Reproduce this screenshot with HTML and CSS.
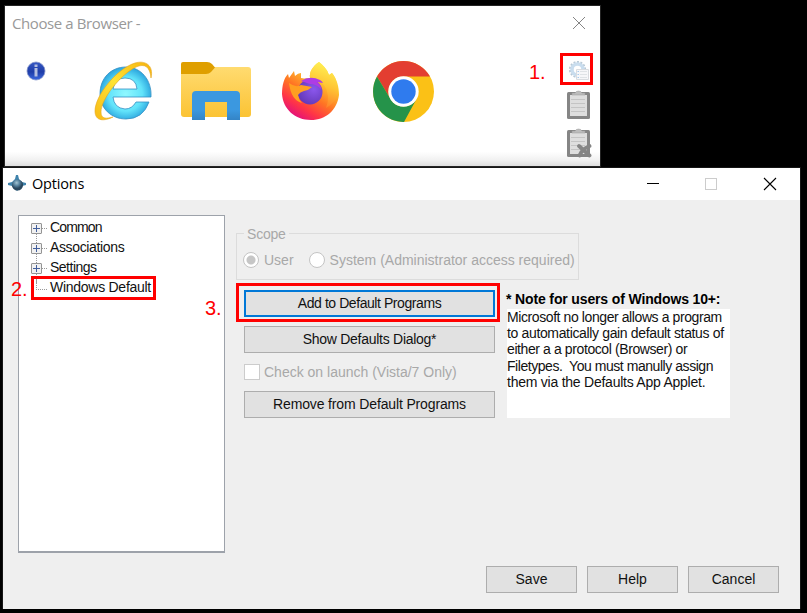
FILE: index.html
```html
<!DOCTYPE html>
<html lang="en">
<head>
<meta charset="utf-8">
<title>Options</title>
<link rel="stylesheet" href="styles.css">
</head>
<body>
<main class="desktop">
  <section class="window chooser">
    <header class="chooser-title">
      <span>Choose a Browser -</span>
      <svg width="12" height="12" viewBox="0 0 12 12"><path d="M0 0L12 12M12 0L0 12" stroke="#858585" fill="none"/></svg>
    </header>
    <div class="chooser-body">
      <svg class="info" width="20" height="20" viewBox="0 0 20 20">
        <defs><linearGradient id="info" x2="0" y2="1"><stop stop-color="#3658c4"/><stop offset=".55" stop-color="#1f3da8"/><stop offset="1" stop-color="#3c68e0"/></linearGradient></defs>
        <circle cx="10" cy="10" r="9" fill="url(#info)" stroke="#8795c9" stroke-width=".8"/>
        <path d="M8.500 3.500h3v2.500h-3zM8.500 7h3v8.500h-3z" fill="#b4bee0"/>
      </svg>
      <svg class="ie" width="60" height="62" viewBox="0 0 60 62">
        <defs>
          <radialGradient id="ie" cx=".5" cy=".52" r=".55"><stop stop-color="#8ff8ff"/><stop offset=".6" stop-color="#62e3fa"/><stop offset="1" stop-color="#229bd9"/></radialGradient>
          <linearGradient id="ring" x1="0" y1="1" x2="1" y2="0"><stop stop-color="#f8ba16"/><stop offset=".5" stop-color="#ffe334"/><stop offset="1" stop-color="#f6b30e"/></linearGradient>
        </defs>
        <path fill="url(#ie)" stroke="#3690c4" stroke-width=".8" fill-rule="evenodd" d="M58 37H20Q21 48 32 49Q39 49 43 42H56Q50 59 33 59C18 59 7 48 7 34C7 18 18 7 33 7C48 7 59 20 58 37ZM20 29H44Q43 18 32 18Q22 18 20 29Z"/>
        <path fill="url(#ring)" stroke="#e6a51a" stroke-width=".6" d="M58 18C61 5 52 0 42 3C23 9 2 36 2 51C2 62 12 61 20 57C13 59 8 59 8 52C8 39 28 14 43 7C52 3 57 7 58 18Z"/>
      </svg>
      <svg class="folder" width="70" height="58" viewBox="0 0 70 58">
        <defs>
          <linearGradient id="folder" x2="0" y2="1"><stop stop-color="#ffdb70"/><stop offset="1" stop-color="#fbc334"/></linearGradient>
          <linearGradient id="stand" x2="0" y2="1"><stop offset=".65" stop-color="#3b98e0"/><stop offset="1" stop-color="#3484c6"/></linearGradient>
        </defs>
        <path fill="url(#folder)" d="M0 10L30 5H67Q70 5 70 8V52Q70 55 67 55H3Q0 55 0 52Z"/>
        <path fill="#df9f00" d="M2 0H26Q29 0 31 2L34 5.500L30 10Q28 12 25 12H0V2Q0 0 2 0Z"/>
        <path fill="url(#stand)" d="M11 58V33Q11 29 15 29H55Q59 29 59 33V58H46V40H24V58Z"/>
      </svg>
      <svg class="firefox" width="60" height="60" viewBox="0 0 60 60">
        <defs>
          <linearGradient id="fox" x1=".85" y1=".05" x2=".25" y2="1"><stop stop-color="#fff34e"/><stop offset=".3" stop-color="#ffc02c"/><stop offset=".56" stop-color="#ff7424"/><stop offset=".78" stop-color="#ff3546"/><stop offset="1" stop-color="#df0b83"/></linearGradient>
          <radialGradient id="globe" cx=".65" cy=".4" r=".65"><stop stop-color="#8b57ed"/><stop offset="1" stop-color="#6439b9"/></radialGradient>
          <linearGradient id="flame" x1=".6" x2=".4" y2="1"><stop stop-color="#fff456"/><stop offset=".5" stop-color="#ffc534"/><stop offset="1" stop-color="#ff7a28"/></linearGradient>
        </defs>
        <path fill="url(#fox)" d="M38 1C42 4 46 8 48 14L51 12C56 18 58 26 58 34C56 49 45 59 30 59C14 59 2 48 1 33C1 24 3 17 7 13L8 17L13 10L14 15Q17 12 20 12L20 17C23 18 26 17 29 17C28 11 32 5 38 1Z"/>
        <path fill="url(#flame)" d="M38 1C42 4 46 8 48 14L51 12C56 18 58 28 55 37Q52 43 45 47Q50 34 43 24Q36 18 29 17C28 11 32 5 38 1Z"/>
        <circle cx="29" cy="31" r="12.500" fill="url(#globe)"/>
        <path fill="#ae3ce4" d="M20 20Q29 14 39 19Q41 20 42 22L36 21Q40 24 40 28Q35 23 29 23Z"/>
        <path fill="#ff9f21" d="M8 22Q15 27 20 24L31 26Q28 29 23 30Q19 31 17 34Q18 39 21 42Q10 39 8 22Z"/>
      </svg>
      <svg class="chrome" width="61" height="61" viewBox="0 0 61 61">
        <circle cx="30.500" cy="30.500" r="30.500" fill="#fbc116"/>
        <path fill="#e33e31" d="M4 15.500A30.500 30.500 0 0 1 57 15.500H30.500A15 15 0 0 0 17.500 38Z"/>
        <path fill="#25934a" d="M4 15.500A30.500 30.500 0 0 0 31 61L43.500 38A15 15 0 0 1 17.500 38Z"/>
        <circle cx="30.500" cy="30.500" r="15.200" fill="#fff"/><circle cx="30.500" cy="30.500" r="12.200" fill="#2f7bee"/>
      </svg>
      <nav class="side-tools">
        <svg class="settings" width="22" height="22" viewBox="0 0 22 22">
          <circle cx="9.500" cy="9.500" r="7.600" fill="none" stroke="#b9c9d6" stroke-width="2" stroke-dasharray="2 1.500"/>
          <circle cx="9.500" cy="9.500" r="5.500" fill="none" stroke="#c9ddee" stroke-width="3.500"/>
          <path fill="#f6f7f9" stroke="#d9dce0" d="M8.500 9.500h12v10h-12z"/><path stroke="#dfe3e6" d="M12 11.500h7M12 14.500h7M12 17.500h7"/><path stroke="#a9cbee" d="M9.500 11.500h1.500M9.500 14.500h1.500M9.500 17.500h1.500"/>
        </svg>
        <svg width="26" height="30" viewBox="0 0 26 30">
          <g id="clipboard"><rect x="1" y="2" width="23" height="27" rx="1.500" fill="#858585"/><path fill="#dedede" d="M4 5h17v21H4z"/><path stroke="#c4c4c4" d="M5 9.500h14M5 13.500h14M5 17.500h14M5 21.500h14"/><path fill="#bcbcbc" stroke="#999" stroke-width=".5" d="M6 5V3h3q1-2 3.500-2T16 3h3v2z"/></g>
        </svg>
        <svg width="26" height="30" viewBox="0 0 26 30"><use href="#clipboard"/><path d="M13 18L23.500 27.500M23.500 18Q16 21 13.500 27.500" fill="none" stroke="#858585" stroke-width="3.800" stroke-linecap="round"/></svg>
      </nav>
    </div>
  </section>

  <section class="window options">
    <header class="options-title">
      <svg width="18" height="18" viewBox="0 0 18 18">
        <defs><radialGradient id="app" cx=".42" cy=".3"><stop stop-color="#a5c4d2"/><stop offset=".5" stop-color="#5c87a2"/><stop offset="1" stop-color="#2a475e"/></radialGradient></defs>
        <path fill="#3f83ac" d="M8 0H10L11 4L14 7L18 8V10L14 11L10 15L9 16L7 14L4 11L0 10V8L4 7L7 4Z"/><circle cx="9.500" cy="10" r="5.600" fill="url(#app)"/>
      </svg>
      <span>Options</span>
      <svg class="controls" width="130" height="14" viewBox="0 0 130 14" fill="none">
        <path d="M0 6.500H12" stroke="#000"/><rect x="58.500" y="1.500" width="11" height="11" stroke="#ccc"/><path d="M117 1L129 13M129 1L117 13" stroke="#000" stroke-width="1.100"/>
      </svg>
    </header>
    <div class="options-body">
      <ul class="tree">
        <li><i class="expander"></i><span class="t-common">Common</span></li>
        <li><i class="expander"></i><span class="t-assoc">Associations</span></li>
        <li><i class="expander"></i><span class="t-settings">Settings</span></li>
        <li><i class="leaf"></i><span class="t-default">Windows Default</span></li>
      </ul>
      <div class="panel">
        <div class="scope">
          <span class="legend">Scope</span>
          <label class="radio"><i class="dot on"></i><span class="t-user">User</span></label>
          <label class="radio"><i class="dot"></i><span class="t-system">System (Administrator access required)</span></label>
        </div>
        <div class="columns">
          <div class="actions">
            <button class="focused"><span class="t-add">Add to Default Programs</span></button>
            <button><span class="t-show">Show Defaults Dialog*</span></button>
            <label class="check"><i></i><span class="t-check">Check on launch (Vista/7 Only)</span></label>
            <button><span class="t-remove">Remove from Default Programs</span></button>
          </div>
          <aside class="note">
            <b>* Note for users of Windows 10+:</b>
            <p><span class="n1">Microsoft no longer allows a program</span><br><span class="n2">to automatically gain default status of</span><br><span class="n3">either a a protocol (Browser) or</span><br><span class="n4">Filetypes.&nbsp; You must manully assign</span><br><span class="n5">them via the Defaults App Applet.</span></p>
          </aside>
        </div>
        <footer class="buttons"><button>Save</button><button>Help</button><button>Cancel</button></footer>
      </div>
    </div>
  </section>

  <span class="mark box1"></span><span class="mark box2"></span><span class="mark box3"></span>
  <span class="step step1">1.</span><span class="step step2">2.</span><span class="step step3">3.</span>
</main>
</body>
</html>
```
FILE: styles.css
```css
* { box-sizing: border-box; }
body { margin: 0; background: #000; }
svg { display: block; flex: none; }
.desktop {
  position: relative;
  width: 807px;
  height: 613px;
  overflow: hidden;
  background: #000;
  font: 14px/20px "Liberation Sans", sans-serif;
  color: #111;
}
.window { position: absolute; }

/* Browser chooser */
.chooser {
  left: 4px; top: 5px; width: 597px; height: 162px;
  border: 1px solid #242424;
  background: linear-gradient(#fff 91%, #f2f2f2 96%, #dedede);
}
.chooser-title {
  display: flex; justify-content: space-between; align-items: center;
  height: 34px; padding: 0 15px 0 7px;
  font: 15px/20px "Open Sans", sans-serif;
  letter-spacing: -.4px; color: #999;
}
.chooser-body { display: flex; align-items: flex-start; padding-left: 21px; }
.info { margin-top: 21px; }
.ie { margin: 20px 0 0 47px; }
.folder { margin: 22px 0 0 28px; }
.firefox { margin: 21px -1px 0 30px; }
.chrome { margin: 21px 0 0 33px; }
.side-tools { display: flex; flex-direction: column; margin: 20px 0 0 132px; }
.side-tools svg + svg { margin-top: 8px; }
.side-tools .settings { margin: 0 0 0 2px; }

/* Options dialog */
.options {
  left: 2px; top: 167px; width: 799px; height: 442px;
  border: 1px solid #161616; border-bottom: 0;
  background: #efefef;
}
.options-title {
  display: flex; align-items: center;
  height: 32px; padding: 0 23px 0 5px;
  background: #fff;
  font: 14.500px/20px "Open Sans", sans-serif; color: #000;
}
.options-title span { margin-left: 6px; letter-spacing: -.2px; }
.controls { margin-left: auto; }
.options-body { display: flex; padding: 15px 0 0 15px; }
.tree {
  width: 207px; height: 338px; margin: 0; padding: 2px 0 0 11px;
  list-style: none; background: #fff; border: 2px solid #9da2aa; border-width: 1px 1px 2px 1px;
}
.tree li { display: flex; align-items: center; height: 20px; }
.tree span { position: relative; top: -1px; margin-left: 4px; white-space: nowrap; }
.expander, .leaf { position: relative; flex: none; width: 11px; height: 11px; margin: 0 4px 0 1px; }
.expander {
  border: 1px solid #949494; border-radius: 1px;
  background: linear-gradient(#435f9c, #435f9c) center/7px 1px no-repeat, linear-gradient(#435f9c, #435f9c) center/1px 7px no-repeat, #f1f1f1;
}
.expander::before { content: ""; position: absolute; left: 10px; top: 4px; width: 5px; border-top: 1px dotted #999; }
.expander::after { content: ""; position: absolute; left: 4px; top: 10px; height: 9px; border-left: 1px dotted #999; }
.leaf::before { content: ""; position: absolute; left: 5px; top: -4px; width: 10px; height: 10px; border: dotted #999; border-width: 0 0 1px 1px; }

.panel { flex: 1; padding: 18px 0 0 11px; }
.scope {
  position: relative; display: flex; align-items: center;
  width: 343px; height: 47px; padding: 7px 0 0 6px;
  border: 1px solid #dcdcdc; color: #a8a8a8;
}
.legend { position: absolute; left: 7px; top: -10px; padding: 0 3px; background: #efefef; letter-spacing: -.2px; }
.radio, .check { display: flex; align-items: center; white-space: nowrap; }
.radio + .radio { margin-left: 15px; }
.radio span { margin-left: 5px; background: #efefef; }
.dot { width: 16px; height: 16px; border: 1px solid #c4c4c4; border-radius: 50%; background: #fff; }
.dot.on { background: radial-gradient(circle, #c6c6c6 4px, #fff 5px); }
.columns { display: flex; padding: 10px 0 0 8px; }
.actions { width: 251px; }
button {
  display: flex; justify-content: center; align-items: center;
  padding: 0 0 1px; height: 27px; border: 1px solid #adadad; outline: 0;
  background: #e1e1e1; color: #111; font: inherit; white-space: nowrap;
}
.actions button { width: 251px; }
.actions button + button { margin-top: 9px; }
.actions .focused { border: 2px solid #0078d7; }
.check { height: 38px; color: #a8a8a8; }
.check i { width: 16px; height: 16px; border: 1px solid #ccc; background: #fff; }
.check span { margin-left: 4px; }
.note { margin-left: 12px; width: 223px; white-space: nowrap; line-height: 16.200px; }
.note b { display: block; height: 19px; margin-left: -1px; line-height: 18px; letter-spacing: -.14px; color: #000; }
.note p { margin: 0; height: 109px; background: #fff; }
.buttons { display: flex; gap: 10px; margin: 148px 0 0 250px; }
.buttons button { width: 91px; }

/* Label tracking */
.t-common { letter-spacing: -.85px; }
.t-assoc { letter-spacing: -.36px; }
.t-settings { letter-spacing: -.5px; }
.t-default { letter-spacing: -.27px; }
.t-add { letter-spacing: -.43px; }
.t-show { letter-spacing: -.27px; }
.t-remove { letter-spacing: -.14px; }
.n1 { letter-spacing: -.41px; }
.n2 { letter-spacing: -.35px; }
.n3 { letter-spacing: -.4px; }
.n4 { letter-spacing: -.45px; }
.n5 { letter-spacing: -.24px; }

/* Step annotations */
.mark { position: absolute; border: 3px solid #f00; }
.box1 { left: 560px; top: 53px; width: 33px; height: 32px; }
.box2 { left: 31px; top: 276px; width: 125px; height: 24px; }
.box3 { left: 236px; top: 283px; width: 264px; height: 39px; }
.step { position: absolute; color: #f00; font-size: 20px; line-height: 24px; }
.step1 { left: 529px; top: 60px; }
.step2 { left: 11px; top: 277px; }
.step3 { left: 205px; top: 296px; }
```
